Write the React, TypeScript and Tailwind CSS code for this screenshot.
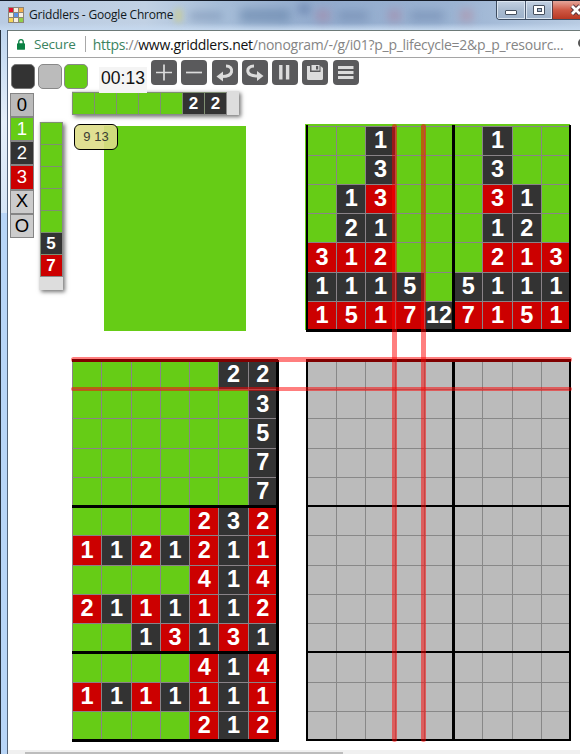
import React from "react";

type Tone = "g" | "k" | "r";

const TONES: Record<Tone, string> = {
  g: "bg-[#66cc16]",
  k: "bg-[#333333]",
  r: "bg-[#cc0000]",
};

// Each clue is a tone letter followed by its number; a lone "g" is an empty cell.
const COLUMN_CLUES = [
  "g g k1 g g g k1 g g",
  "g g k3 g g g k3 g g",
  "g k1 r3 g g g r3 k1 g",
  "g k2 k1 g g g k1 k2 g",
  "r3 r1 r2 g g g r2 r1 r3",
  "k1 k1 k1 k5 g k5 k1 k1 k1",
  "r1 r5 r1 r7 k12 r7 r1 r5 r1",
];

const ROW_CLUES = [
  "g g g g g k2 k2",
  "g g g g g g k3",
  "g g g g g g k5",
  "g g g g g g k7",
  "g g g g g g k7",
  "g g g g r2 k3 r2",
  "r1 k1 r2 k1 r2 k1 r1",
  "g g g g r4 k1 r4",
  "r2 k1 r1 k1 r1 k1 r2",
  "g g k1 r3 k1 r3 k1",
  "g g g g r4 k1 r4",
  "r1 k1 r1 k1 r1 k1 r1",
  "g g g g r2 k1 r2",
];

function ClueTable({ rows, cols }: { rows: string[]; cols: string }) {
  return (
    <div className={`grid h-full w-full auto-rows-fr ${cols}`}>
      {rows.flatMap((row, y) =>
        row.split(" ").map((c, x) => (
          <div
            key={`${y}-${x}`}
            className={`flex min-h-0 min-w-0 items-center justify-center border-l border-t border-[#8a8388] text-[23.5px] leading-none font-bold text-white ${TONES[c[0] as Tone]}`}
          >
            {c.slice(1)}
          </div>
        )),
      )}
    </div>
  );
}

function Rule({ at }: { at: string }) {
  return <div className={`absolute bg-black ${at}`} />;
}

function MiniCell({ c }: { c: string }) {
  return (
    <div
      className={`flex h-[22px] w-[22px] shrink-0 items-center justify-center border-l border-t border-[#7f8f72] text-[17px] leading-none font-bold text-white ${TONES[c[0] as Tone]}`}
    >
      {c.slice(1)}
    </div>
  );
}

function ToolButton({ children }: { children: React.ReactNode }) {
  return (
    <div className="flex h-[25px] w-[26px] shrink-0 items-center justify-center rounded-[4px] bg-[#5a5a5c]">
      <svg width="26" height="25" viewBox="0 0 26 25" fill="none" stroke="#dcdcdc">
        {children}
      </svg>
    </div>
  );
}

function TitleBar() {
  return (
    <div className="relative flex h-[30px] overflow-hidden border-t border-[#151c28] bg-[linear-gradient(90deg,#b9cbe2_0%,#c1d1e4_25%,#a6bdd8_38%,#92abcd_55%,#9bb3d2_78%,#b8cbe2_100%)]">
      <div className="absolute inset-x-0 bottom-0 h-[7px] bg-linear-to-b from-transparent to-[#c6d9ef]" />
      <div className="absolute top-[8px] left-[175px] h-[13px] w-[7px] bg-[#c7cd9b] blur-[3px]" />
      <div className="absolute top-[11px] left-[190px] h-[8px] w-[32px] bg-[#7890b2] opacity-60 blur-[4px]" />
      <div className="absolute top-[8px] left-[240px] h-[13px] w-[50px] bg-[#6482a8] opacity-60 blur-[5px]" />
      <div className="absolute top-[3px] left-[298px] h-[10px] w-[12px] bg-[#526c9c] opacity-50 blur-[4px]" />
      <div className="absolute top-[8px] left-[316px] h-[13px] w-[14px] bg-[#a983a3] opacity-50 blur-[4px]" />
      <div className="absolute top-[10px] left-[338px] h-[10px] w-[30px] bg-[#7089af] opacity-60 blur-[5px]" />
      <div className="absolute top-[8px] left-[388px] h-[13px] w-[13px] bg-[#a983a3] opacity-50 blur-[4px]" />
      <div className="absolute top-[10px] left-[410px] h-[10px] w-[34px] bg-[#7089af] opacity-60 blur-[5px]" />
      <div className="absolute top-[8px] left-[460px] h-[13px] w-[13px] bg-[#b58aa0] opacity-50 blur-[4px]" />
      <div className="relative mt-[6px] ml-[8px] grid h-[16px] w-[16px] shrink-0 grid-cols-3 gap-px bg-[#8d8578] p-px">
        <i className="bg-[#e6102c]" />
        <i className="bg-[#f7efe2]" />
        <i className="bg-[#f3b04e]" />
        <i className="bg-[#f7efe2]" />
        <i className="bg-[#5b93e8]" />
        <i className="bg-[#f7efe2]" />
        <i className="bg-[#f5d659]" />
        <i className="bg-[#f7efe2]" />
        <i className="bg-[#93cf48]" />
      </div>
      <div className="relative mt-[5px] ml-[5px] h-[18px] font-['Open_Sans',sans-serif] text-[12px] leading-[18px] tracking-[-0.2px] whitespace-nowrap text-[#101820]">
        Griddlers - Google Chrome
      </div>
      <div className="relative ml-auto flex h-[19px] w-[84px] shrink-0 overflow-hidden rounded-bl-[4px] border-b border-l border-[#3d4c60]">
        <div className="flex w-[29px] items-center justify-center border-r border-[#4b5a70] bg-linear-to-b from-[#c4d2e3] via-[#a9bbd0] to-[#9db2cb] shadow-[inset_0_0_0_1px_#dbe5f0]">
          <div className="mt-[5px] h-[5px] w-[12px] rounded-[1px] border border-[#46505e] bg-white" />
        </div>
        <div className="flex w-[27px] items-center justify-center border-r border-[#5c3a40] bg-linear-to-b from-[#c4d2e3] via-[#a9bbd0] to-[#9db2cb] shadow-[inset_0_0_0_1px_#dbe5f0]">
          <div className="flex h-[10px] w-[12px] items-center justify-center rounded-[1px] border border-[#46505e] bg-white">
            <div className="h-[4px] w-[5px] border border-[#46505e] bg-[#a9bbd0]" />
          </div>
        </div>
        <div className="flex flex-1 items-center justify-end bg-linear-to-b from-[#e4a69b] via-[#cf5844] to-[#b83722]">
          <svg width="10" height="12" viewBox="0 0 10 12" fill="none">
            <path d="M2 2 L10 10 M10 2 L2 10" stroke="#56343a" strokeWidth="4.6" />
            <path d="M2 2 L10 10 M10 2 L2 10" stroke="#fff" strokeWidth="2.8" />
          </svg>
        </div>
      </div>
    </div>
  );
}

function AddressBar() {
  return (
    <div className="flex h-[28px] shrink-0 items-center overflow-hidden border-t border-b border-t-[#6d7a78] border-b-[#a5a5a5] bg-white font-['Open_Sans',sans-serif] text-[14px] whitespace-nowrap">
      <svg className="ml-[9px] shrink-0" width="8" height="13" viewBox="0 0 9 13">
        <path d="M2 6V3.5a2.5 2.5 0 0 1 5 0V6" fill="none" stroke="#0b8043" strokeWidth="1.5" />
        <rect y="5" width="9" height="7.5" rx="1" fill="#0b8043" />
      </svg>
      <span className="ml-[9px] w-[42px] text-[13.5px] tracking-[-0.2px] text-[#3a8360]">Secure</span>
      <span className="ml-[9px] h-[16px] w-px shrink-0 bg-[#a8a8a8]" />
      <span className="ml-[7px] w-[480px] shrink-0 tracking-[-0.27px] text-[#858585]">
        <span className="text-[#3a8360]">https</span>://
        <span className="text-[#111111]">www.griddlers.net</span>
        /nonogram/-/g/i01?p_p_lifecycle=2&amp;p_p_resourc...
      </span>
      <svg className="ml-[5px] shrink-0" width="10" height="12" viewBox="0 0 10 12" fill="none" stroke="#555" strokeWidth="2">
        <circle cx="5" cy="5" r="4" />
      </svg>
    </div>
  );
}

function Toolbar() {
  return (
    <div className="relative z-10 flex h-[33px] shrink-0 items-start">
      <div className="mt-[6px] ml-[3px] flex gap-[2px]">
        <div className="h-[25px] w-[24px] rounded-[5px] border border-[#777] bg-[#333]" />
        <div className="ml-[1px] h-[25px] w-[24px] rounded-[5px] border border-[#888] bg-[#bbb]" />
        <div className="h-[25px] w-[24px] rounded-[5px] border border-[#888] bg-[#66cc16]" />
      </div>
      <div className="mt-[9px] ml-[11px] flex h-[26px] w-[48px] items-center justify-center bg-[#f4f4f4] pb-[2px] text-[17.5px] leading-none text-[#111]">
        00:13
      </div>
      <div className="mt-[2px] ml-[4px] flex gap-[4.3px]">
        <ToolButton>
          <path d="M5 12.5H21M13 4.5V20.5" strokeWidth="1.7" />
        </ToolButton>
        <ToolButton>
          <path d="M5 12.5H21" strokeWidth="1.7" />
        </ToolButton>
        <ToolButton>
          <path d="M14 6C18 6 20.5 8.5 19.5 12C18.5 15.5 14.5 16.5 10 16.5" strokeWidth="3" />
          <path d="M4.5 16.5L11 11.5V21.5Z" fill="#dcdcdc" stroke="none" />
        </ToolButton>
        <ToolButton>
          <path d="M12 6C8 6 5 8.5 6 12C7 15.5 11 16 16 16" strokeWidth="3" />
          <path d="M21.5 16L15 11V21Z" fill="#dcdcdc" stroke="none" />
        </ToolButton>
        <ToolButton>
          <path d="M8.8 5V19.5M15.6 5V19.5" strokeWidth="3.4" />
        </ToolButton>
        <ToolButton>
          <path d="M5 6H8V12H18.5V6L21 8V18.5Q21 20 19.5 20H6.5Q5 20 5 18.5Z" fill="#dcdcdc" stroke="none" />
          <path d="M9.5 5H17.5V10.5H9.5Z" fill="#dcdcdc" stroke="none" />
          <path d="M14 6H16.2V9.5H14Z" fill="#5a5a5c" stroke="none" />
        </ToolButton>
        <ToolButton>
          <path d="M5 7.5H20.5M5 12.5H20.5M5 17.5H20.5" strokeWidth="2.8" />
        </ToolButton>
      </div>
    </div>
  );
}

function Palette() {
  const base =
    "flex h-[24.17px] items-center justify-center border border-[#858585] text-[18.5px] leading-none";
  return (
    <div className="mt-[2px] h-[145px] w-[24px] shrink-0">
      <div className={`${base} bg-[#bbb] text-black`}>0</div>
      <div className={`${base} bg-[#66cc16] text-white`}>1</div>
      <div className={`${base} bg-[#333] text-white`}>2</div>
      <div className={`${base} bg-[#cc0000] text-white`}>3</div>
      <div className={`${base} bg-[#ccc] text-black`}>X</div>
      <div className={`${base} bg-[#ccc] text-black`}>O</div>
    </div>
  );
}

function Puzzle() {
  return (
    <div className="relative ml-[9px] w-[501px] shrink-0">
      <div className="flex h-[24px] w-[167px] bg-[#dddddd] pt-[1px] shadow-[2px_2px_4px_#777]">
        <div className="flex h-[23px] border-r border-b border-[#8a8a8a]">
          {["g", "g", "g", "g", "g", "k2", "k2"].map((c, i) => (
            <MiniCell key={i} c={c} />
          ))}
        </div>
      </div>

      <div className="mt-[9px] flex h-[207px]">
        <div className="relative w-[233px] shrink-0">
          <div className="mt-[2px] ml-[32px] h-[205px] w-[142px] bg-[#66cc16]" />
          <div className="absolute top-0 left-[2px] flex h-[26px] w-[44px] items-center justify-center rounded-[6px] border border-black bg-[#dddd87]/90 pb-[2px] text-[13px] leading-none text-[#3b3b33]">
            9 13
          </div>
        </div>
        <div className="relative h-[206.2px] w-[265px] shrink-0 bg-[#66cc16] pt-[1.5px] pl-[2px]">
          <div className="h-[204.7px] w-[263.1px]">
            <ClueTable rows={COLUMN_CLUES} cols="grid-cols-9" />
          </div>
          <Rule at="top-[1px] left-[1px] h-[206px] w-[2px]" />
          <Rule at="top-[1px] left-[147px] h-[206px] w-[3px]" />
          <Rule at="top-[1px] left-[264px] h-[206px] w-[2px]" />
          <Rule at="top-[205px] left-[1px] h-[3px] w-[265px]" />
        </div>
      </div>

      <div className="mt-[29px] flex h-[380px]">
        <div className="relative w-[205px] shrink-0">
          <ClueTable rows={ROW_CLUES} cols="grid-cols-7" />
          <Rule at="top-[-1px] left-0 h-[3px] w-[206px]" />
          <Rule at="top-[145px] left-0 h-[3px] w-[206px]" />
          <Rule at="top-[291px] left-0 h-[3px] w-[206px]" />
          <Rule at="top-[379px] left-0 h-[3px] w-[206px]" />
          <Rule at="top-0 left-[204px] h-[382px] w-[3px]" />
        </div>
        <div className="relative ml-[30px] w-[263.1px] shrink-0">
          <div className="grid h-full auto-rows-fr grid-cols-9">
            {Array.from({ length: 117 }, (_, i) => (
              <div key={i} className="border-t border-l border-[#888888] bg-[#bbbbbb]" />
            ))}
          </div>
          <Rule at="top-[-1px] left-[-1px] h-[3px] w-[265px]" />
          <Rule at="top-[145px] left-[-1px] h-[2px] w-[265px]" />
          <Rule at="top-[291px] left-[-1px] h-[2px] w-[265px]" />
          <Rule at="top-[379px] left-[-1px] h-[2px] w-[265px]" />
          <Rule at="top-[-1px] left-[-1px] h-[382px] w-[2px]" />
          <Rule at="top-[-1px] left-[145px] h-[382px] w-[3px]" />
          <Rule at="top-[-1px] left-[262px] h-[382px] w-[2px]" />
        </div>
      </div>

      {/* crosshair over the hovered column and row */}
      <div className="absolute top-[33px] left-[320px] h-[618px] w-[5px] rounded-full bg-[#ff0000]/50" />
      <div className="absolute top-[33px] left-[349px] h-[618px] w-[5px] rounded-full bg-[#ff0000]/50" />
      <div className="absolute top-[266px] left-[-1px] h-[5px] w-[501px] rounded-full bg-[#ff0000]/50" />
      <div className="absolute top-[296px] left-[-1px] h-[4px] w-[501px] rounded-full bg-[#ff0000]/50" />
    </div>
  );
}

export default function App() {
  return (
    <div className="flex h-[754px] w-[580px] flex-col overflow-hidden bg-white font-['Liberation_Sans',Arial,sans-serif]">
      <TitleBar />
      <div className="flex min-h-0 flex-1">
        <div className="flex w-[8px] shrink-0 flex-col border-r border-l border-r-[#53647a] border-l-[#26303e]">
          <div className="h-[183px] bg-linear-to-b from-[#bfd6f0] via-[#e4eef9] to-[#d6e5f6]" />
          <div className="flex-1 bg-[#b8d5f7]" />
        </div>
        <div className="flex min-w-0 flex-1 flex-col">
          <AddressBar />
          <Toolbar />
          <div className="flex h-[659px] shrink-0 pl-[2px]">
            <Palette />
            <div className="mt-[31px] ml-[5px] flex h-[168px] w-[24px] shrink-0 flex-col items-center bg-[#dddddd] shadow-[2px_2px_4px_#777]">
              <div className="border-r border-b border-[#8a8a8a]">
                {["g", "g", "g", "g", "g", "k5", "r7"].map((c, i) => (
                  <MiniCell key={i} c={c} />
                ))}
              </div>
            </div>
            <Puzzle />
          </div>
          <div className="flex-1 bg-[#f0f0f0] pt-[2px] pl-[17px]">
            <div className="h-[4px] w-[318px] bg-[#bdbdbd]" />
          </div>
        </div>
      </div>
    </div>
  );
}
